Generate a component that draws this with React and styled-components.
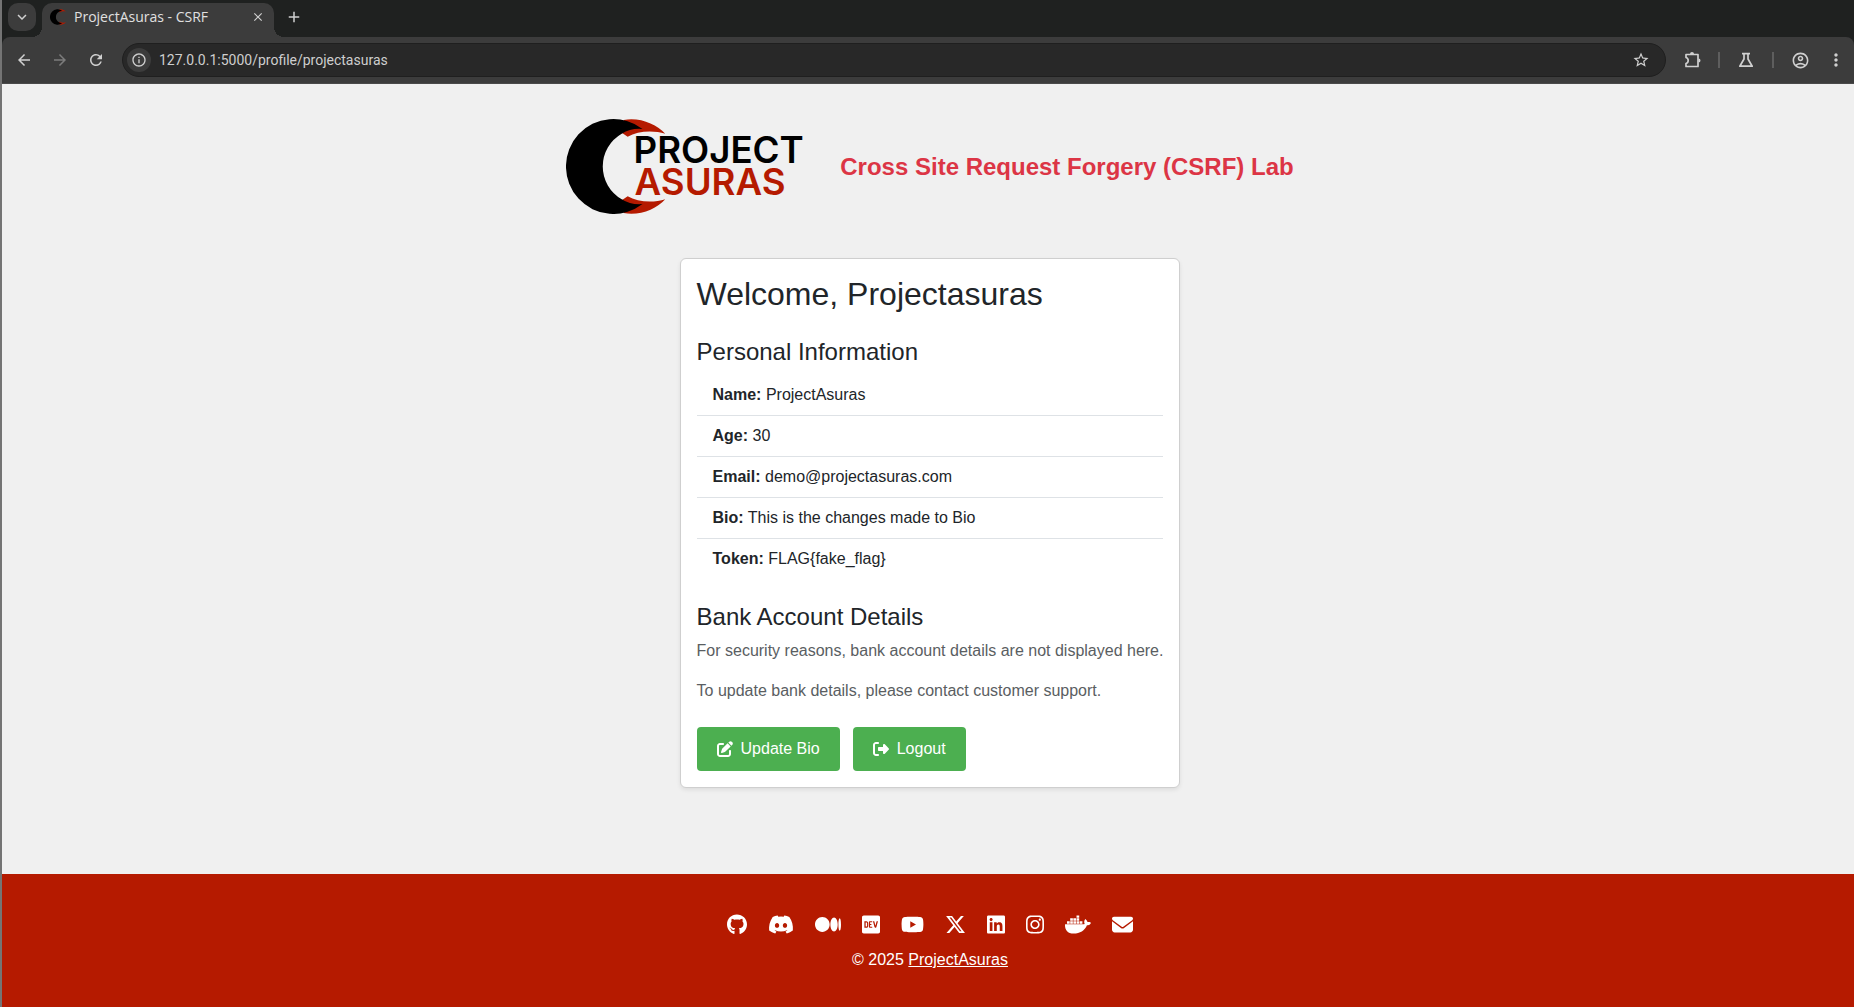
import styled, { createGlobalStyle } from 'styled-components';
import {
  MdAdd,
  MdArrowBack,
  MdArrowForward,
  MdClose,
  MdExpandMore,
  MdInfoOutline,
  MdMoreVert,
  MdOutlineAccountCircle,
  MdRefresh,
  MdStarBorder,
} from 'react-icons/md';
import {
  FaDev,
  FaDiscord,
  FaDocker,
  FaEnvelope,
  FaGithub,
  FaInstagram,
  FaLinkedin,
  FaMedium,
  FaPenToSquare,
  FaRightFromBracket,
  FaXTwitter,
  FaYoutube,
} from 'react-icons/fa6';

const GlobalStyle = createGlobalStyle`
  *, *::before, *::after {
    box-sizing: border-box;
  }

  body {
    margin: 0;
    color: #212529;
    background: #f0f0f0;
    font-family: "Liberation Sans", Arial, sans-serif;
    font-size: 16px;
    line-height: 24px;
  }

  h1, h2, p, ul {
    margin: 0;
    padding: 0;
    font-weight: 400;
  }
`;

const Window = styled.div`
  display: flex;
  flex-direction: column;
  min-height: 100vh;
  border-left: 2px solid #747474;
`;

/* browser bars */

const TabStrip = styled.div`
  display: flex;
  align-items: flex-start;
  height: 37px;
  padding: 3px 6px 0;
  background: #1f2120;
`;

const ChromeButton = styled.button`
  display: flex;
  flex: none;
  align-items: center;
  justify-content: center;
  width: ${props => props.$size || 28}px;
  height: ${props => props.$size || 28}px;
  padding: 0;
  border: 0;
  border-radius: ${props => props.$radius || '50%'};
  color: ${props => (props.$dim ? '#7c7c7c' : '#d0d0d0')};
  background: ${props => (props.$filled ? '#3c3c3c' : 'transparent')};
`;

const Tab = styled.div`
  position: relative;
  display: flex;
  align-items: center;
  gap: 8px;
  width: 232px;
  height: 34px;
  margin: 0 6px;
  padding: 0 6px 6px 8px;
  border-radius: 10px 10px 0 0;
  color: #e0e0e0;
  background: #3c3c3c;
  font: 14px/20px "Open Sans", "Noto Sans", sans-serif;

  &::before,
  &::after {
    content: '';
    position: absolute;
    bottom: 0;
    width: 10px;
    height: 10px;
  }

  &::before {
    right: 100%;
    background: radial-gradient(circle at 0 0, transparent 10px, #3c3c3c 10px);
  }

  &::after {
    left: 100%;
    background: radial-gradient(circle at 100% 0, transparent 10px, #3c3c3c 10px);
  }
`;

const TabTitle = styled.span`
  flex: 1;
  white-space: nowrap;
`;

const ToolbarBack = styled.div`
  background: #1f2120;
`;

const Toolbar = styled.div`
  display: flex;
  align-items: center;
  height: 47px;
  padding: 0 4px 0 8px;
  border-bottom: 1px solid #4a4a4a;
  border-radius: 8px 8px 0 0;
  background: #3c3c3c;
`;

const NavButtons = styled.div`
  display: flex;
  gap: 8px;
  margin-right: 12px;
`;

const AddressBar = styled.div`
  display: flex;
  flex: 1;
  align-items: center;
  height: 34px;
  padding: 0 10px 0 4px;
  border: 1px solid #1f1f1f;
  border-radius: 17px;
  background: #282828;
`;

const AddressInput = styled.input`
  flex: 1;
  min-width: 0;
  padding: 0 8px;
  border: 0;
  outline: 0;
  color: #cecece;
  background: transparent;
  font: 14px/20px Roboto, "Noto Sans", sans-serif;
`;

const ToolbarActions = styled.div`
  display: flex;
  align-items: center;
  gap: 8px;
  margin-left: 12px;
`;

const Divider = styled.span`
  width: 2px;
  height: 16px;
  margin: 0 4px;
  background: #5e5e5e;
`;

/* page */

const Page = styled.div`
  display: flex;
  flex: 1;
  flex-direction: column;
`;

const Main = styled.main`
  flex: 1;
  padding: 34px 0 84px 4px;
`;

const Header = styled.header`
  display: flex;
  align-items: center;
  justify-content: center;
  gap: 24px;
  margin-bottom: 44px;
`;

const LogoText = styled.text`
  font: 600 37px Inter, sans-serif;
`;

const LabTitle = styled.h1`
  color: #dc3545;
  font-size: 24px;
  font-weight: 700;
  line-height: 29px;
`;

const Card = styled.section`
  width: fit-content;
  margin: 0 auto;
  padding: 16px;
  border: 1px solid #cfcfcf;
  border-radius: 6px;
  background: #fff;
  box-shadow: 0 2px 4px rgba(0, 0, 0, 0.08);
`;

const Welcome = styled.h2`
  margin-bottom: 24px;
  font-size: 32px;
  line-height: 38px;
`;

const SectionTitle = styled.h2`
  margin-bottom: 8px;
  font-size: 24px;
  line-height: 29px;
`;

const InfoList = styled.ul`
  margin-bottom: 23px;
  padding-top: 1px;
  list-style: none;
`;

const InfoItem = styled.li`
  padding: 8px 16px;

  & + & {
    border-top: 1px solid #dee2e6;
  }
`;

const Note = styled.p`
  margin-bottom: ${props => (props.$last ? 24 : 16)}px;
  color: #5a5e62;
`;

const Actions = styled.div`
  display: flex;
  gap: 13px;
`;

const ActionButton = styled.button`
  display: flex;
  align-items: center;
  gap: 8px;
  padding: 10px 20px;
  border: 0;
  border-radius: 4px;
  color: #fff;
  background: #4caf50;
  font: inherit;
`;

const Footer = styled.footer`
  padding: 38px 0 35px 4px;
  color: #fff;
  background: #b51a00;
  text-align: center;
`;

const SocialLinks = styled.nav`
  display: flex;
  align-items: center;
  justify-content: center;
  gap: 21px;
  height: 24px;
  margin-bottom: 12px;
`;

const SocialLink = styled.a`
  display: flex;
  color: inherit;

  svg {
    width: ${props => props.$width}px;
    height: 21px;
  }
`;

const FooterLink = styled.a`
  color: inherit;
`;

const info = [
  { label: 'Name', value: 'ProjectAsuras' },
  { label: 'Age', value: '30' },
  { label: 'Email', value: 'demo@projectasuras.com' },
  { label: 'Bio', value: 'This is the changes made to Bio' },
  { label: 'Token', value: 'FLAG{fake_flag}' },
];

const socials = [
  { name: 'GitHub', Icon: FaGithub, width: 20 },
  { name: 'Discord', Icon: FaDiscord, width: 26 },
  { name: 'Medium', Icon: FaMedium, width: 26 },
  { name: 'Dev', Icon: FaDev, width: 18 },
  { name: 'YouTube', Icon: FaYoutube, width: 23 },
  { name: 'X', Icon: FaXTwitter, width: 21 },
  { name: 'LinkedIn', Icon: FaLinkedin, width: 18 },
  { name: 'Instagram', Icon: FaInstagram, width: 18 },
  { name: 'Docker', Icon: FaDocker, width: 26 },
  { name: 'Email', Icon: FaEnvelope, width: 21 },
];

const Crescent = () => (
  <>
    <path
      fill='#b51a00'
      d='M58 1 C74 -2 91 5 100 15 C88 11 72 12 62 18 L56 14 Z M58 95 C74 98 91 91 100 81 C88 85 72 84 62 78 L56 82 Z'
    />
    <path d='M77 10 A48 48 0 1 0 77 86 Q65 87 56 81 A38 38 0 0 1 56 15 Q65 9 77 10 Z' />
  </>
);

const Logo = () => (
  <svg width='250' height='96' viewBox='0 -1 252 97' role='img' aria-label='Project Asuras'>
    <Crescent />
    <LogoText x='68' y='44'>PROJECT</LogoText>
    <LogoText x='69' y='77' fill='#b51a00'>ASURAS</LogoText>
  </svg>
);

const Favicon = () => (
  <svg width='16' height='16' viewBox='0 0 100 96' aria-hidden='true'>
    <Crescent />
  </svg>
);

const ExtensionIcon = () => (
  <svg width='20' height='20' viewBox='0 0 20 20' aria-hidden='true'>
    <path
      fill='none'
      stroke='currentColor'
      strokeWidth='1.7'
      strokeLinejoin='round'
      d='M4 4.5 H16 V16.5 H4 V13.5 Q6.2 12.8 6.2 10.5 Q6.2 8.2 4 7.5 Z'
    />
    <path fill='currentColor' d='M8 4 a2 2 0 0 1 4 0 Z M16.5 8.5 a2 2 0 0 1 0 4 Z' />
  </svg>
);

const FlaskIcon = () => (
  <svg width='18' height='18' viewBox='0 0 18 18' aria-hidden='true'>
    <path
      fill='none'
      stroke='currentColor'
      strokeWidth='1.7'
      strokeLinejoin='round'
      d='M5 2.7 H13 M7 3 V8 L2.8 15.2 H15.2 L11 8 V3'
    />
  </svg>
);

const BrowserBars = () => (
  <>
    <TabStrip>
      <ChromeButton $filled $radius='10px' aria-label='Search tabs'><MdExpandMore size={18} /></ChromeButton>
      <Tab>
        <Favicon />
        <TabTitle>ProjectAsuras - CSRF</TabTitle>
        <ChromeButton $size={20} aria-label='Close tab'><MdClose size={14} /></ChromeButton>
      </Tab>
      <ChromeButton aria-label='New tab'><MdAdd size={18} /></ChromeButton>
    </TabStrip>
    <ToolbarBack>
      <Toolbar>
        <NavButtons>
          <ChromeButton aria-label='Back'><MdArrowBack size={18} /></ChromeButton>
          <ChromeButton $dim aria-label='Forward'><MdArrowForward size={18} /></ChromeButton>
          <ChromeButton aria-label='Reload'><MdRefresh size={18} /></ChromeButton>
        </NavButtons>
        <AddressBar>
          <ChromeButton $filled $size={24} aria-label='Site information'><MdInfoOutline size={16} /></ChromeButton>
          <AddressInput aria-label='Address' defaultValue='127.0.0.1:5000/profile/projectasuras' />
          <ChromeButton aria-label='Bookmark'><MdStarBorder size={18} /></ChromeButton>
        </AddressBar>
        <ToolbarActions>
          <ChromeButton aria-label='Extensions'><ExtensionIcon /></ChromeButton>
          <Divider />
          <ChromeButton aria-label='Labs'><FlaskIcon /></ChromeButton>
          <Divider />
          <ChromeButton aria-label='Profile'><MdOutlineAccountCircle size={19} /></ChromeButton>
          <ChromeButton aria-label='Menu'><MdMoreVert size={20} /></ChromeButton>
        </ToolbarActions>
      </Toolbar>
    </ToolbarBack>
  </>
);

const ProfileCard = () => (
  <Card>
    <Welcome>Welcome, Projectasuras</Welcome>
    <SectionTitle>Personal Information</SectionTitle>
    <InfoList>
      {info.map(({ label, value }) => (
        <InfoItem key={label}><strong>{label}:</strong> {value}</InfoItem>
      ))}
    </InfoList>
    <SectionTitle>Bank Account Details</SectionTitle>
    <Note>For security reasons, bank account details are not displayed here.</Note>
    <Note $last>To update bank details, please contact customer support.</Note>
    <Actions>
      <ActionButton><FaPenToSquare /> Update Bio</ActionButton>
      <ActionButton><FaRightFromBracket /> Logout</ActionButton>
    </Actions>
  </Card>
);

const App = () => (
  <Window>
    <GlobalStyle />
    <BrowserBars />
    <Page>
      <Main>
        <Header>
          <Logo />
          <LabTitle>Cross Site Request Forgery (CSRF) Lab</LabTitle>
        </Header>
        <ProfileCard />
      </Main>
      <Footer>
        <SocialLinks>
          {socials.map(({ name, Icon, width }) => (
            <SocialLink key={name} href='#' $width={width} aria-label={name}><Icon /></SocialLink>
          ))}
        </SocialLinks>
        <p>© 2025 <FooterLink href='#'>ProjectAsuras</FooterLink></p>
      </Footer>
    </Page>
  </Window>
);

export default App;
